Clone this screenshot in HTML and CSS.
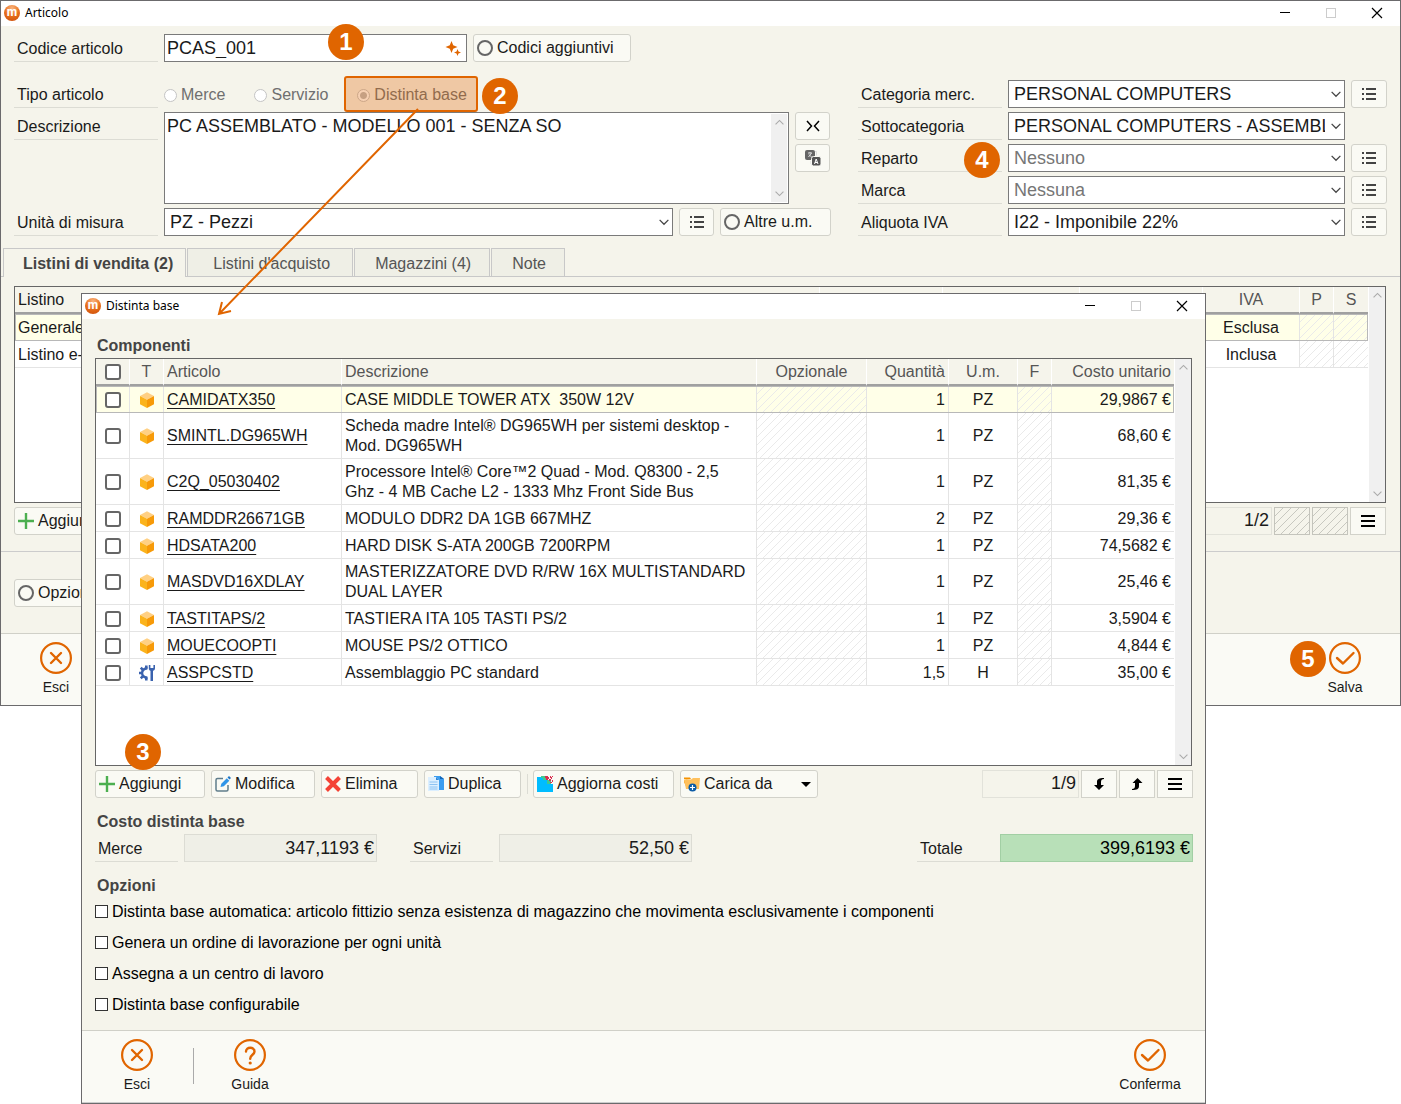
FILE: index.html
```
<!DOCTYPE html>
<html lang="it">
<head>
  <meta charset="UTF-8" />
  <meta name="viewport" content="width=device-width, initial-scale=1.0" />
  <title>Articolo - Distinta base</title>
  <link rel="stylesheet" href="styles.css">
</head>
<body>
  <!-- Shared icons -->
  <svg class="sprite" aria-hidden="true">
    <symbol id="i-ring" viewBox="0 0 16 16"><circle cx="8" cy="8" r="7" fill="none" stroke="#666" stroke-width="2" /></symbol>
    <symbol id="i-list" viewBox="0 0 16 16">
      <path d="M1 3h2M1 8h2M1 13h2M5 3h10M5 8h10M5 13h10" stroke="#444" stroke-width="2" />
    </symbol>
    <symbol id="i-menu" viewBox="0 0 16 16"><path d="M1 3h14M1 8h14M1 13h14" stroke="#000" stroke-width="2" /></symbol>
    <symbol id="i-plus" viewBox="0 0 16 16"><path d="M8 0v16M0 8h16" stroke="#4caf50" stroke-width="2.4" /></symbol>
    <symbol id="i-down" viewBox="0 0 8 8"><path d="M.5 2.3 4 5.8 7.5 2.3" fill="none" stroke="currentColor" /></symbol>
    <symbol id="i-min" viewBox="0 0 12 12"><path d="M1 5.5h10" stroke="#000" /></symbol>
    <symbol id="i-max" viewBox="0 0 12 12"><rect x="1.5" y="1.5" width="9" height="9" fill="none" stroke="#ccc" /></symbol>
    <symbol id="i-close" viewBox="0 0 12 12"><path d="M1 1l10 10M11 1 1 11" stroke="#000" stroke-width="1.2" /></symbol>
    <symbol id="i-box" viewBox="0 0 16 16">
      <path d="M8 .3 15 4 8 7.8 1 4z" fill="#ffd083" />
      <path d="M1 4l7 3.8V16l-7-3.8z" fill="#fbb31c" />
      <path d="M15 4 8 7.8V16l7-3.8z" fill="#f79a08" />
    </symbol>
    <symbol id="i-service" viewBox="0 0 16 16">
      <path d="M8.5 3.6A4.5 4.5 0 1 0 8.500 12.4" fill="none" stroke="#3a62ae" stroke-width="2.4" />
      <path d="M7.300 3.500V.5M3.800 4.800 1.800 2.700M3 8H0M3.800 11.200l-2 2.100M7.300 12.500v3" stroke="#3a62ae" stroke-width="2.600" />
      <path d="M9.800 0v3.200c0 1.400.7 2.200 1.700 2.600V16h2.500V5.800c1.200-.4 2-1.200 2-2.600V0h-1.600v3h-3V0z" fill="#3a62ae" />
    </symbol>
    <symbol id="i-cancel" viewBox="0 0 32 32">
      <g fill="none" stroke="#e06500"><circle cx="16" cy="16" r="14.9" stroke-width="2.2" />
      <path d="M11 11l10 10M21 11 11 21" stroke-width="2.4" stroke-linecap="round" /></g>
    </symbol>
    <symbol id="i-ok" viewBox="0 0 32 32">
      <g fill="none" stroke="#e06500"><circle cx="16" cy="16" r="14.9" stroke-width="2.2" />
      <path d="M8 16l6 5.5L24.5 11" stroke-width="2.4" stroke-linecap="round" stroke-linejoin="round" /></g>
    </symbol>
    <symbol id="i-help" viewBox="0 0 32 32">
      <g fill="none" stroke="#e06500"><circle cx="16" cy="16" r="14.9" stroke-width="2.2" />
      <path d="M12 12.5c0-5 8.500-5 8.500 0 0 3.300-4.300 3.300-4.300 7.200" stroke-width="2.4" stroke-linecap="round" /></g>
      <circle cx="16.2" cy="24" r="1.6" fill="#e06500" />
    </symbol>
  </svg>

  <main class="desktop">

    <!-- Articolo -->
    <section class="window article">
      <header class="titlebar">
        <span class="logo">m</span>
        <h1>Articolo</h1>
        <button type="button" aria-label="Riduci"><svg><use href="#i-min" /></svg></button>
        <button type="button" aria-label="Ingrandisci" disabled><svg><use href="#i-max" /></svg></button>
        <button type="button" aria-label="Chiudi"><svg><use href="#i-close" /></svg></button>
      </header>

      <form class="article-form">
        <div class="fields left">
          <div class="row code-row">
            <label class="label" for="code">Codice articolo</label>
            <div class="code-box">
              <input id="code" type="text" value="PCAS_001" />
              <svg class="icon" viewBox="0 0 16 16">
                <path d="M6.500 1 8.200 5.300 12.500 7 8.200 8.700 6.500 13 4.800 8.700 .5 7l4.300-1.700zM12.500 9l1 2.500 2.500 1-2.500 1-1 2.500-1-2.500-2.500-1 2.500-1z" fill="#e06500" />
              </svg>
            </div>
            <button type="button" class="btn w-codes"><svg class="icon"><use href="#i-ring" /></svg>Codici aggiuntivi</button>
          </div>

          <div class="row" role="radiogroup" aria-labelledby="type-label">
            <span class="label" id="type-label">Tipo articolo</span>
            <div class="radios">
              <label><input type="radio" name="type" disabled />Merce</label>
              <label><input type="radio" name="type" disabled />Servizio</label>
              <label><input type="radio" name="type" checked disabled />Distinta base</label>
            </div>
          </div>

          <div class="row tall">
            <label class="label" for="desc">Descrizione</label>
            <div class="area">
              <textarea id="desc">PC ASSEMBLATO - MODELLO 001 - SENZA SO</textarea>
              <div class="scroll"><svg class="up"><use href="#i-down" /></svg><svg><use href="#i-down" /></svg></div>
            </div>
            <div class="side">
              <button type="button" class="btn square" aria-label="Comprimi">
                <svg class="icon" viewBox="0 0 16 16"><path d="M2 3l4.5 5L2 13M14 3 9.500 8l4.500 5" fill="none" stroke="#000" stroke-width="1.5" /></svg>
              </button>
              <button type="button" class="btn square" aria-label="Traduci">
                <svg class="icon" viewBox="0 0 16 16">
                  <rect x="0" y="0" width="10" height="10" rx="2" fill="#666" />
                  <path d="M10 1.500h1.500v4M3 3h4M5 2v1M6.500 3 3.500 7M4 4.500 6.500 7M6 11v3h1" fill="none" stroke="#ddd" />
                  <rect x="6.5" y="6.5" width="9.5" height="9.5" rx="2" fill="#555" stroke="#fafaf5" />
                  <path d="M9.500 14l1.700-5 1.800 5M10 12.500h2.500" fill="none" stroke="#fff" />
                </svg>
              </button>
            </div>
          </div>

          <div class="row">
            <label class="label" for="unit">Unità di misura</label>
            <div class="select">
              <select id="unit"><option>PZ - Pezzi</option></select>
              <svg><use href="#i-down" /></svg>
            </div>
            <button type="button" class="btn square" aria-label="Elenco unità"><svg class="icon"><use href="#i-list" /></svg></button>
            <button type="button" class="btn w-other"><svg class="icon"><use href="#i-ring" /></svg>Altre u.m.</button>
          </div>
        </div>

        <div class="fields right">
          <div class="row">
            <label class="label" for="cat">Categoria merc.</label>
            <div class="select"><select id="cat"><option>PERSONAL COMPUTERS</option></select><svg><use href="#i-down" /></svg></div>
            <button type="button" class="btn square" aria-label="Elenco categorie"><svg class="icon"><use href="#i-list" /></svg></button>
          </div>
          <div class="row no-button">
            <label class="label" for="subcat">Sottocategoria</label>
            <div class="select"><select id="subcat"><option>PERSONAL COMPUTERS - ASSEMBLATI</option></select><svg><use href="#i-down" /></svg></div>
          </div>
          <div class="row">
            <label class="label" for="dept">Reparto</label>
            <div class="select"><select id="dept" class="empty"><option>Nessuno</option></select><svg><use href="#i-down" /></svg></div>
            <button type="button" class="btn square" aria-label="Elenco reparti"><svg class="icon"><use href="#i-list" /></svg></button>
          </div>
          <div class="row">
            <label class="label" for="brand">Marca</label>
            <div class="select"><select id="brand" class="empty"><option>Nessuna</option></select><svg><use href="#i-down" /></svg></div>
            <button type="button" class="btn square" aria-label="Elenco marche"><svg class="icon"><use href="#i-list" /></svg></button>
          </div>
          <div class="row">
            <label class="label" for="vat">Aliquota IVA</label>
            <div class="select"><select id="vat"><option>I22 - Imponibile 22%</option></select><svg><use href="#i-down" /></svg></div>
            <button type="button" class="btn square" aria-label="Elenco aliquote"><svg class="icon"><use href="#i-list" /></svg></button>
          </div>
        </div>
      </form>

      <nav class="tabs">
        <button type="button" class="active">Listini di vendita (2)</button>
        <button type="button">Listini d'acquisto</button>
        <button type="button" class="short">Magazzini (4)</button>
        <button type="button" class="short">Note</button>
      </nav>

      <div class="panel">
        <div class="grid-box price-lists">
          <table>
            <colgroup><col><col class="c-a"><col class="c-b"><col class="c-a"><col class="c-vat"><col class="c-flag"><col class="c-flag"></colgroup>
            <thead>
              <tr><th class="dark">Listino</th><th></th><th></th><th></th><th class="center">IVA</th><th class="center">P</th><th class="center">S</th></tr>
            </thead>
            <tbody>
              <tr class="selected"><td>Generale</td><td></td><td></td><td></td><td class="center">Esclusa</td><td class="hatch"></td><td class="hatch"></td></tr>
              <tr><td>Listino e-</td><td></td><td></td><td></td><td class="center">Inclusa</td><td class="hatch"></td><td class="hatch"></td></tr>
            </tbody>
          </table>
          <div class="scroll"><svg class="up"><use href="#i-down" /></svg><svg><use href="#i-down" /></svg></div>
        </div>
        <div class="toolbar">
          <button type="button" class="btn w-add"><svg class="icon"><use href="#i-plus" /></svg>Aggiungi</button>
          <div class="pager">
            <output class="counter">1/2</output>
            <span class="blank"></span>
            <span class="blank"></span>
            <button type="button" aria-label="Menu"><svg class="icon"><use href="#i-menu" /></svg></button>
          </div>
        </div>
      </div>

      <div class="options-bar">
        <button type="button" class="btn w-add"><svg class="icon"><use href="#i-ring" /></svg>Opzioni</button>
      </div>

      <footer class="actions">
        <button type="button"><svg><use href="#i-cancel" /></svg>Esci</button>
        <button type="button" class="confirm"><svg><use href="#i-ok" /></svg>Salva</button>
      </footer>
    </section>

    <!-- Distinta base -->
    <section class="window bom">
      <header class="titlebar">
        <span class="logo">m</span>
        <h1>Distinta base</h1>
        <button type="button" aria-label="Riduci"><svg><use href="#i-min" /></svg></button>
        <button type="button" aria-label="Ingrandisci" disabled><svg><use href="#i-max" /></svg></button>
        <button type="button" aria-label="Chiudi"><svg><use href="#i-close" /></svg></button>
      </header>

      <div class="content">
        <h2>Componenti</h2>
        <div class="grid-box components">
          <table>
            <colgroup><col class="c-check"><col class="c-check"><col class="c-item"><col><col class="c-opt"><col class="c-qty"><col class="c-um"><col class="c-check"><col class="c-cost"></colgroup>
            <thead>
              <tr>
                <th class="center"><input type="checkbox" aria-label="Seleziona tutto" /></th>
                <th class="center">T</th><th>Articolo</th><th>Descrizione</th><th class="center">Opzionale</th>
                <th class="num">Quantità</th><th class="center">U.m.</th><th class="center">F</th><th class="num">Costo unitario</th>
              </tr>
            </thead>
            <tbody>
              <tr class="selected">
                <td class="center"><input type="checkbox" aria-label="CAMIDATX350" /></td><td class="center"><svg class="icon"><use href="#i-box" /></svg></td>
                <td><a href="#">CAMIDATX350</a></td><td class="text">CASE MIDDLE TOWER ATX&nbsp; 350W 12V</td><td class="hatch"></td>
                <td class="num">1</td><td class="center">PZ</td><td class="hatch"></td><td class="num">29,9867 €</td>
              </tr>
              <tr>
                <td class="center"><input type="checkbox" aria-label="SMINTL.DG965WH" /></td><td class="center"><svg class="icon"><use href="#i-box" /></svg></td>
                <td><a href="#">SMINTL.DG965WH</a></td><td class="text">Scheda madre Intel® DG965WH per sistemi desktop - Mod. DG965WH</td><td class="hatch"></td>
                <td class="num">1</td><td class="center">PZ</td><td class="hatch"></td><td class="num">68,60 €</td>
              </tr>
              <tr>
                <td class="center"><input type="checkbox" aria-label="C2Q_05030402" /></td><td class="center"><svg class="icon"><use href="#i-box" /></svg></td>
                <td><a href="#">C2Q_05030402</a></td><td class="text">Processore Intel® Core™2 Quad - Mod. Q8300 - 2,5 Ghz - 4 MB Cache L2 - 1333 Mhz Front Side Bus</td><td class="hatch"></td>
                <td class="num">1</td><td class="center">PZ</td><td class="hatch"></td><td class="num">81,35 €</td>
              </tr>
              <tr>
                <td class="center"><input type="checkbox" aria-label="RAMDDR26671GB" /></td><td class="center"><svg class="icon"><use href="#i-box" /></svg></td>
                <td><a href="#">RAMDDR26671GB</a></td><td class="text">MODULO DDR2 DA 1GB 667MHZ</td><td class="hatch"></td>
                <td class="num">2</td><td class="center">PZ</td><td class="hatch"></td><td class="num">29,36 €</td>
              </tr>
              <tr>
                <td class="center"><input type="checkbox" aria-label="HDSATA200" /></td><td class="center"><svg class="icon"><use href="#i-box" /></svg></td>
                <td><a href="#">HDSATA200</a></td><td class="text">HARD DISK S-ATA 200GB 7200RPM</td><td class="hatch"></td>
                <td class="num">1</td><td class="center">PZ</td><td class="hatch"></td><td class="num">74,5682 €</td>
              </tr>
              <tr>
                <td class="center"><input type="checkbox" aria-label="MASDVD16XDLAY" /></td><td class="center"><svg class="icon"><use href="#i-box" /></svg></td>
                <td><a href="#">MASDVD16XDLAY</a></td><td class="text">MASTERIZZATORE DVD R/RW 16X MULTISTANDARD DUAL LAYER</td><td class="hatch"></td>
                <td class="num">1</td><td class="center">PZ</td><td class="hatch"></td><td class="num">25,46 €</td>
              </tr>
              <tr>
                <td class="center"><input type="checkbox" aria-label="TASTITAPS/2" /></td><td class="center"><svg class="icon"><use href="#i-box" /></svg></td>
                <td><a href="#">TASTITAPS/2</a></td><td class="text">TASTIERA ITA 105 TASTI PS/2</td><td class="hatch"></td>
                <td class="num">1</td><td class="center">PZ</td><td class="hatch"></td><td class="num">3,5904 €</td>
              </tr>
              <tr>
                <td class="center"><input type="checkbox" aria-label="MOUECOOPTI" /></td><td class="center"><svg class="icon"><use href="#i-box" /></svg></td>
                <td><a href="#">MOUECOOPTI</a></td><td class="text">MOUSE PS/2 OTTICO</td><td class="hatch"></td>
                <td class="num">1</td><td class="center">PZ</td><td class="hatch"></td><td class="num">4,844 €</td>
              </tr>
              <tr>
                <td class="center"><input type="checkbox" aria-label="ASSPCSTD" /></td><td class="center"><svg class="icon"><use href="#i-service" /></svg></td>
                <td><a href="#">ASSPCSTD</a></td><td class="text">Assemblaggio PC standard</td><td class="hatch"></td>
                <td class="num">1,5</td><td class="center">H</td><td class="hatch"></td><td class="num">35,00 €</td>
              </tr>
            </tbody>
          </table>
          <div class="scroll"><svg class="up"><use href="#i-down" /></svg><svg><use href="#i-down" /></svg></div>
        </div>

        <div class="toolbar">
          <button type="button" class="btn w-add"><svg class="icon"><use href="#i-plus" /></svg>Aggiungi</button>
          <button type="button" class="btn w-edit">
            <svg class="icon" viewBox="0 0 16 16">
              <path d="M8 2.500H2.500a1.500 1.500 0 0 0-1.500 1.500V13.500A1.500 1.500 0 0 0 2.500 15h9a1.500 1.500 0 0 0 1.500-1.500V9" fill="none" stroke="#607d8b" stroke-width="1.5" />
              <path d="M5.500 11l.8-3.300 5.500-5.500 2.500 2.500-5.500 5.500z" fill="#2f95e8" /><path d="M12.500 1.500 14 0l2 2-1.500 1.500z" fill="#1e74c4" />
            </svg>Modifica</button>
          <button type="button" class="btn w-del">
            <svg class="icon" viewBox="0 0 16 16"><path d="M1.500 1.500l13 13M14.500 1.500l-13 13" stroke="#f44336" stroke-width="4" /></svg>Elimina</button>
          <button type="button" class="btn w-del">
            <svg class="icon" viewBox="0 0 16 16">
              <path d="M6 0h6l4 3v11H6z" fill="#3b9df0" /><path d="M12 0v3h4z" fill="#1466b8" />
              <path d="M0 1h8l3 3v11H0z" fill="#dcefff" /><path d="M8 1l3 3H8z" fill="#2f86d6" />
              <path d="M1.500 6h8M1.500 8.500h8M1.500 11h8M1.500 13h8" stroke="#8cc2f2" />
            </svg>Duplica</button>
          <span class="divider"></span>
          <button type="button" class="btn w-update">
            <svg class="icon" viewBox="0 0 16 16">
              <path d="M0 1h4V0h4v4h2v4h6v8H0z" fill="#00bcff" />
              <path d="M4 0h4v2h2v2h4v4h-4V4H6V2H4z" fill="#3fc98e" />
              <path d="M8 0h3v4H9V2H8zM13 0h1v2h-1zM15 0h1v1h-1zM12 3h2v2h-2zM14 1h1v2h-1zM15 4h1v2h-1zM13 6h2v1h-2zM11 1h1v2h-1z" fill="#d72e50" />
            </svg>Aggiorna costi</button>
          <button type="button" class="btn w-load">
            <svg class="icon" viewBox="0 0 16 16">
              <path d="M0 1.500h6l1 1.500H0zM0 3v3l3 6z" fill="#f59100" /><path d="M0 4l2-1 5 .5L9 2h7l-1 11H2z" fill="#ffc05c" />
              <circle cx="8.5" cy="11.5" r="4" fill="#0c5ba6" /><path d="M8.500 9v5M6 11.500h5" stroke="#fff" stroke-width="1.2" />
            </svg>Carica da
            <svg class="caret" viewBox="0 0 10 5"><path d="M0 0h10L5 5z" /></svg></button>
          <div class="pager">
            <output class="counter">1/9</output>
            <button type="button" aria-label="Sposta giù"><svg class="icon" viewBox="0 0 16 16"><path d="M13 2C8 2 6 3 6 6v3H3l5 5 5-5h-3V6c0-2 1-3 3-3z" /></svg></button>
            <button type="button" aria-label="Sposta su"><svg class="icon" viewBox="0 0 16 16"><path d="M3 14c5 0 7-1 7-4V7h3.500l-5-5-5 5H6v3c0 2-1 3-3 3z" /></svg></button>
            <button type="button" aria-label="Menu"><svg class="icon"><use href="#i-menu" /></svg></button>
          </div>
        </div>

        <h2 class="next">Costo distinta base</h2>
        <div class="costs">
          <div class="cost"><label class="label" for="goods">Merce</label><input id="goods" type="text" value="347,1193 €" readonly /></div>
          <div class="cost"><label class="label" for="services">Servizi</label><input id="services" type="text" value="52,50 €" readonly /></div>
          <div class="cost total"><label class="label" for="total">Totale</label><input id="total" type="text" value="399,6193 €" readonly /></div>
        </div>

        <h2 class="next tight">Opzioni</h2>
        <div class="checks">
          <label><input type="checkbox" />Distinta base automatica: articolo fittizio senza esistenza di magazzino che movimenta esclusivamente i componenti</label>
          <label><input type="checkbox" />Genera un ordine di lavorazione per ogni unità</label>
          <label><input type="checkbox" />Assegna a un centro di lavoro</label>
          <label><input type="checkbox" />Distinta base configurabile</label>
        </div>
      </div>

      <footer class="actions">
        <button type="button"><svg><use href="#i-cancel" /></svg>Esci</button>
        <span class="rule"></span>
        <button type="button"><svg><use href="#i-help" /></svg>Guida</button>
        <button type="button" class="confirm"><svg><use href="#i-ok" /></svg>Conferma</button>
      </footer>
    </section>

    <!-- Step markers -->
    <div class="highlight"></div>
    <svg class="arrow" viewBox="0 0 210 215"><path d="M206 5 7 210M10 198l-3 12 12-3" fill="none" stroke="#e06500" stroke-width="2" /></svg>
    <span class="step step-1">1</span>
    <span class="step step-2">2</span>
    <span class="step step-3">3</span>
    <span class="step step-4">4</span>
    <span class="step step-5">5</span>
  </main>
</body>
</html>
```
FILE: styles.css
```
* {
  margin: 0;
  padding: 0;
  box-sizing: border-box;
}

body {
  background: #fff;
  color: #1a1a1a;
  font-family: "Liberation Sans", Arial, sans-serif;
  font-size: 16px;
  line-height: 20px;
}

button, input, select, textarea {
  font: inherit;
  color: inherit;
}

button {
  border: none;
  background: none;
}

svg {
  display: block;
  flex: none;
}

.sprite {
  position: absolute;
  width: 0;
  height: 0;
}

.icon {
  width: 16px;
  height: 16px;
}

.desktop {
  position: relative;
  min-height: 100vh;
  overflow: hidden;
}

/* Windows */
.window {
  background: #f5f4eb;
  border: 1px solid #6b6a6c;
}

.bom {
  position: absolute;
  top: 293px;
  left: 81px;
  right: 195px;
}

.titlebar {
  display: flex;
  align-items: center;
  height: 25px;
  padding: 0 0 1px 3px;
  background: #fff;
}

.titlebar .logo {
  width: 16px;
  height: 16px;
  background: radial-gradient(circle at 50% 20%, #f9b27c, #e8701c 50%, #c94a08);
  border-radius: 50%;
  color: #fff;
  font: bold 12px/14px Roboto, sans-serif;
  text-align: center;
}

.titlebar h1 {
  flex: 1;
  padding-left: 5px;
  color: #000;
  font: 12px/16px "Noto Sans", "Open Sans", sans-serif;
}

.titlebar button {
  display: flex;
  justify-content: center;
  width: 46px;
}

.titlebar button svg {
  width: 12px;
  height: 12px;
}

/* Form rows */
.article-form {
  display: grid;
  grid-template-columns: minmax(0, 1fr) 529px;
  align-items: end;
  gap: 27px;
  padding: 8px 13px 0;
}

.fields {
  display: flex;
  flex-direction: column;
  gap: 4px;
}

.row {
  display: flex;
  gap: 6px;
  height: 28px;
}

.row.tall {
  height: 92px;
}

.code-row {
  margin-bottom: 14px;
}

.no-button {
  padding-right: 42px;
}

.label {
  flex: none;
  width: 144px;
  height: 28px;
  padding: 1px 0 0 3px;
  border-bottom: 1px solid #dcdcd4;
  line-height: 28px;
}

.code-box {
  display: flex;
  align-items: center;
  width: 303px;
  padding-right: 5px;
  background: #fff;
  border: 1px solid #7a7a7a;
}

.code-box input {
  flex: 1;
  min-width: 0;
  padding-left: 2px;
  border: none;
  outline: none;
  font-size: 18px;
}

.radios {
  display: flex;
  align-items: center;
  gap: 29px;
  padding-top: 2px;
  color: #6f6f6f;
}

.radios label {
  display: flex;
  align-items: center;
  gap: 4px;
}

.radios input {
  appearance: none;
  width: 13px;
  height: 13px;
  border: 1px solid #c4c4c4;
  border-radius: 50%;
  background: #fff;
}

.radios input:checked {
  background: radial-gradient(circle, #bbb 0 3px, #fff 4px);
}

.area {
  display: flex;
  flex: 1;
  padding: 1px;
  background: #fff;
  border: 1px solid #7a7a7a;
}

.area textarea {
  flex: 1;
  padding: 2px 1px;
  border: none;
  outline: none;
  resize: none;
  font-size: 18px;
}

.side {
  display: flex;
  flex-direction: column;
  gap: 4px;
  margin-right: 1px;
}

.select {
  display: grid;
  flex: 1;
  align-items: center;
  min-width: 0;
}

.select select {
  grid-area: 1 / 1;
  appearance: none;
  width: 100%;
  height: 28px;
  padding: 0 19px 0 5px;
  background: #fff;
  border: 1px solid #7a7a7a;
  border-radius: 0;
  font-size: 18px;
}

.select .empty {
  color: #767676;
}

.select svg {
  grid-area: 1 / 1;
  justify-self: end;
  width: 10px;
  height: 10px;
  margin-right: 4px;
  color: #444;
  pointer-events: none;
}

/* Buttons */
.btn {
  display: flex;
  flex: none;
  align-items: center;
  gap: 4px;
  height: 28px;
  padding: 0 3px;
  background: #fafaf4;
  border: 1px solid #d2d2ca;
  border-radius: 3px;
  white-space: nowrap;
}

.square {
  justify-content: center;
  width: 35px;
}

.right .square {
  width: 36px;
}

.w-codes { width: 158px; }
.w-other { width: 111px; }
.w-add { width: 110px; }
.w-edit { width: 104px; }
.w-del { width: 97px; }
.w-update { width: 141px; }
.w-load { width: 138px; }

/* Tabs */
.tabs {
  display: flex;
  gap: 1px;
  height: 29px;
  margin-top: 12px;
  padding-left: 2px;
  border-bottom: 1px solid #c8c8c8;
}

.tabs button {
  padding: 2px 22px 0 25px;
  background: #efefe6;
  border: 1px solid #c8c8c8;
  border-bottom: none;
  color: #555;
}

.tabs .short {
  padding: 2px 18px 0 20px;
}

.tabs .active {
  height: 29px;
  padding: 2px 12px 0 19px;
  background: #f5f4eb;
  color: #444;
  font-weight: bold;
}

.panel {
  padding: 9px 14px 16px 13px;
}

/* Tables */
.grid-box {
  display: flex;
  align-items: flex-start;
  background: #fff;
  border: 1px solid #666;
}

.price-lists {
  height: 217px;
}

.components {
  height: 408px;
  margin-right: 1px;
}

table {
  flex: 1;
  min-width: 0;
  table-layout: fixed;
  border-spacing: 0;
  margin-right: 1px;
}

th {
  height: 27px;
  padding: 0 3px;
  background: #f5f4eb;
  border-right: 1px solid #fff;
  border-bottom: 2px solid #a0a0a0;
  color: #555;
  font-weight: normal;
  text-align: left;
}

.dark {
  color: #1a1a1a;
}

td {
  height: 27px;
  padding: 3px 3px 2px;
  border-right: 1px solid #e4e4e4;
  border-bottom: 1px solid #e4e4e4;
}

th:last-child, td:last-child {
  border-right: none;
}

.center {
  text-align: center;
}

.num {
  text-align: right;
}

.text {
  padding-right: 8px;
}

.selected td {
  background-color: #ffffe8;
}

.selected {
  outline: 1px solid #b8b8b8;
  outline-offset: -1px;
}

td.hatch {
  background-image: linear-gradient(135deg, transparent 46%, #eaeaea 46%, #eaeaea 54%, transparent 54%);
  background-size: 8px 8px;
}

td .icon {
  margin: 0 auto;
}

td a {
  color: inherit;
  text-underline-offset: 3px;
}

.c-a { width: 123px; }
.c-b { width: 137px; }
.c-vat { width: 97px; }
.c-flag { width: 34px; }
.c-check { width: 34px; }
.c-item { width: 178px; }
.c-opt { width: 110px; }
.c-qty { width: 82px; }
.c-um { width: 69px; }
.c-cost { width: 122px; }

.components table input {
  display: block;
  appearance: none;
  width: 16px;
  height: 16px;
  margin: 0 auto;
  background: #fff;
  border: 2px solid #666;
  border-radius: 3px;
}

.scroll {
  display: flex;
  flex: none;
  flex-direction: column;
  align-self: stretch;
  align-items: center;
  justify-content: space-between;
  width: 16px;
  padding: 4px 0;
  background: #f0f0f0;
  color: #aaa;
}

.scroll svg {
  width: 9px;
  height: 9px;
}

.scroll .up {
  transform: rotate(180deg);
}

/* Toolbar */
.toolbar {
  display: flex;
  gap: 6px;
  margin-top: 4px;
}

.divider {
  width: 1px;
  height: 20px;
  margin: 4px 0 0;
  background: #dcdcd4;
}

.w-update {
  margin-left: -1px;
}

.caret {
  width: 10px;
  height: 5px;
  margin: 0 3px 0 auto;
}

.pager {
  display: flex;
  gap: 2px;
  margin-left: auto;
}

.counter {
  width: 97px;
  height: 28px;
  padding-right: 2px;
  border: 1px solid #e2e2da;
  font-size: 18px;
  line-height: 25px;
  text-align: right;
}

.pager button, .blank {
  display: flex;
  align-items: center;
  justify-content: center;
  width: 36px;
  height: 28px;
  background-color: #fafaf4;
  border: 1px solid #d2d2ca;
}

.blank {
  background: linear-gradient(135deg, transparent 46%, #c8c8c0 46%, #c8c8c0 54%, transparent 54%) 0 0 / 8px 8px;
  border-color: #c4c4bc;
}

.options-bar {
  padding: 27px 13px 26px;
  border-top: 1px solid #ccc;
}

/* Footer actions */
.actions {
  display: flex;
  padding: 8px 13px 10px;
  background: #fafaf5;
  border-top: 1px solid #d0d0c8;
}

.actions button {
  display: flex;
  flex-direction: column;
  align-items: center;
  gap: 5px;
  width: 84px;
  font-size: 14px;
  line-height: 16px;
}

.actions svg {
  width: 32px;
  height: 32px;
}

.actions .confirm {
  margin-left: auto;
}

.bom .actions {
  border-bottom: 1px solid #ccc;
}

.rule {
  width: 1px;
  height: 36px;
  margin: 9px 14px 0;
  background: #aaa;
}

/* Bill of materials */
.content {
  padding: 16px 12px 10px 13px;
}

h2 {
  padding: 1px 0 0 2px;
  margin-bottom: 2px;
  color: #444;
  font-size: 16px;
  line-height: 20px;
}

h2.next {
  margin-top: 13px;
}

h2.tight {
  margin-bottom: 0;
}

.costs {
  display: flex;
  gap: 33px;
}

.cost {
  display: flex;
  gap: 6px;
}

.cost .label {
  width: 83px;
}

.cost input {
  width: 193px;
  height: 28px;
  padding: 0 2px;
  background: #efefe7;
  border: 1px solid #dcdcd4;
  font-size: 18px;
  text-align: right;
}

.total {
  gap: 0;
  margin-left: auto;
}

.total input {
  background: #b8e0b8;
  border-color: #a2cfa4;
  color: #000;
}

.checks {
  color: #000;
}

.checks label {
  display: flex;
  align-items: center;
  gap: 4px;
  height: 31px;
}

.checks input {
  appearance: none;
  width: 13px;
  height: 13px;
  background: #fff;
  border: 1px solid #333;
}

/* Markers drawn over the windows */
.highlight {
  position: absolute;
  top: 76px;
  left: 344px;
  width: 134px;
  height: 36px;
  background: rgba(224, 101, 0, 0.3);
  border: 2px solid #e06500;
  border-radius: 3px;
}

.arrow {
  position: absolute;
  top: 104px;
  left: 212px;
  width: 210px;
  height: 215px;
  pointer-events: none;
}

.step {
  position: absolute;
  width: 36px;
  height: 36px;
  background: #e06500;
  border-radius: 50%;
  color: #fff;
  font-size: 24px;
  font-weight: bold;
  line-height: 36px;
  text-align: center;
}

.step-1 { top: 24px; left: 328px; }
.step-2 { top: 78px; left: 482px; }
.step-3 { top: 734px; left: 125px; }
.step-4 { top: 142px; right: 401px; }
.step-5 { top: 641px; right: 75px; }
```
